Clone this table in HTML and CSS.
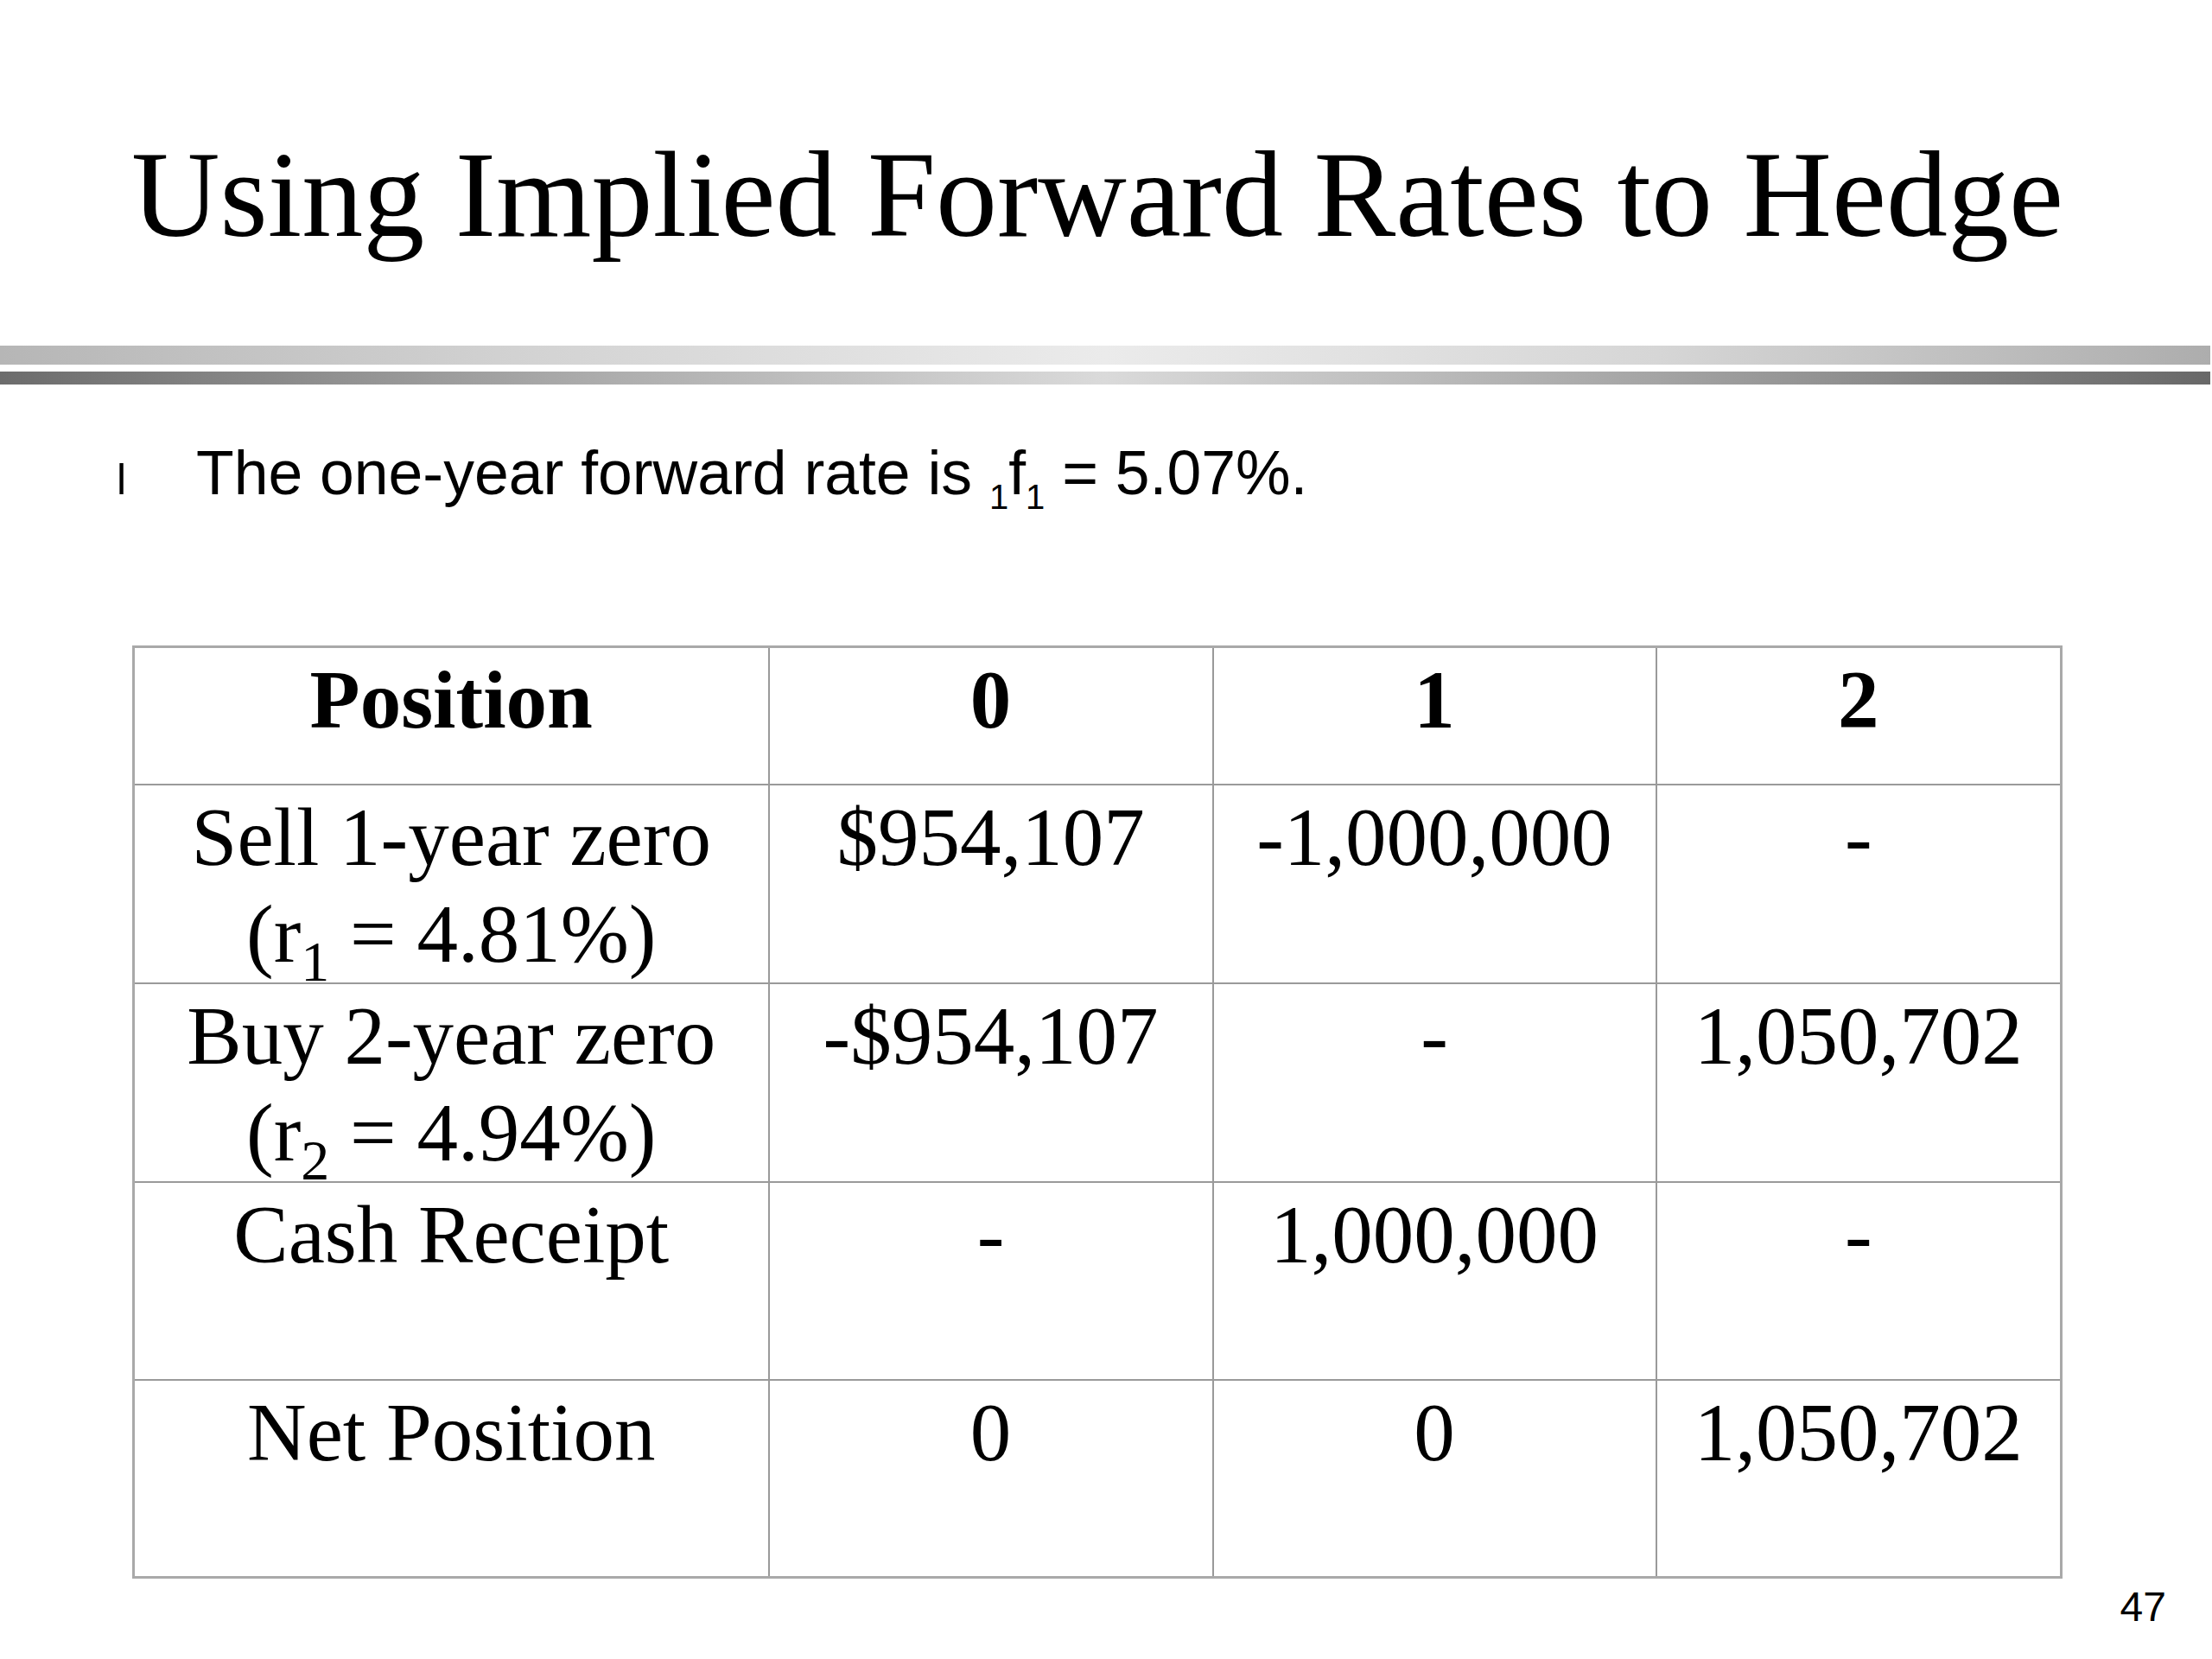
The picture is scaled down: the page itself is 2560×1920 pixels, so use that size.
FILE: index.html
```html
<!DOCTYPE html>
<html lang="en">
<head>
<meta charset="utf-8">
<title>Using Implied Forward Rates to Hedge</title>
<link rel="stylesheet" href="styles.css">
</head>
<body>
<div class="slide">
  <h1 class="title">Using Implied Forward Rates to Hedge</h1>
  <div class="rule rule-top"></div>
  <div class="rule rule-bottom"></div>
  <ul class="bullets">
    <li><span class="marker">l</span><span class="text">The one-year forward rate is <sub class="bsub">1</sub>f<sub class="bsub">1</sub> = 5.07%.</span></li>
  </ul>
  <table class="hedge">
    <colgroup>
      <col class="c-pos">
      <col class="c-0">
      <col class="c-1">
      <col class="c-2">
    </colgroup>
    <thead>
      <tr class="head-row">
        <th>Position</th>
        <th>0</th>
        <th>1</th>
        <th>2</th>
      </tr>
    </thead>
    <tbody>
      <tr>
        <td>Sell 1-year zero<br>(r<sub class="tsub">1</sub> = 4.81%)</td>
        <td>$954,107</td>
        <td>-1,000,000</td>
        <td>-</td>
      </tr>
      <tr>
        <td>Buy 2-year zero<br>(r<sub class="tsub">2</sub> = 4.94%)</td>
        <td>-$954,107</td>
        <td>-</td>
        <td>1,050,702</td>
      </tr>
      <tr>
        <td>Cash Receipt</td>
        <td>-</td>
        <td>1,000,000</td>
        <td>-</td>
      </tr>
      <tr>
        <td>Net Position</td>
        <td>0</td>
        <td>0</td>
        <td>1,050,702</td>
      </tr>
    </tbody>
  </table>
  <div class="page-num">47</div>
</div>
</body>
</html>
```

FILE: styles.css
```css
html, body {
  margin: 0;
  padding: 0;
  background: #ffffff;
}

.slide {
  width: 2560px;
  height: 1920px;
  background: #ffffff;
  color: #000000;
  overflow: hidden;
}

.title {
  margin: 145px 0 0 0;
  padding-left: 152px;
  font-family: "Liberation Serif", "Times New Roman", serif;
  font-weight: normal;
  font-size: 142px;
  line-height: 160px;
  height: 160px;
  white-space: nowrap;
}

.rule {
  width: 2558px;
}

.rule-top {
  margin-top: 95px;
  height: 22px;
  background: linear-gradient(to right, #b6b6b6 0%, #d4d4d4 25%, #ebebeb 50%, #d6d6d6 75%, #adadad 100%);
}

.rule-bottom {
  margin-top: 8px;
  height: 15px;
  background: linear-gradient(to right, #6c6c6c 0%, #a8a8a8 25%, #dadada 50%, #a4a4a4 75%, #686868 100%);
}

.bullets {
  list-style: none;
  margin: 57px 0 0 0;
  padding: 0;
  font-family: "Liberation Sans", Arial, sans-serif;
}

.bullets li {
  display: flex;
  align-items: baseline;
  height: 90px;
  line-height: 90px;
}

.marker {
  font-size: 50px;
  width: 92px;
  padding-left: 135px;
  box-sizing: content-box;
}

.text {
  font-size: 71.5px;
  white-space: nowrap;
}

.bsub {
  font-size: 40px;
  vertical-align: -17px;
  line-height: 0;
}

.hedge {
  margin: 155px 0 0 153px;
  border-collapse: collapse;
  table-layout: fixed;
  width: 2231px;
  font-family: "Liberation Serif", "Times New Roman", serif;
  font-size: 95px;
  line-height: 112px;
  border: 3px solid #a9a9a9;
}

.c-pos { width: 735px; }
.c-0 { width: 514px; }
.c-1 { width: 513px; }
.c-2 { width: 469px; }

.hedge th,
.hedge td {
  border: 2px solid #9a9a9a;
  text-align: center;
  vertical-align: top;
  padding: 4px 0 0 0;
  white-space: nowrap;
}

.hedge th {
  font-weight: bold;
}

.head-row {
  height: 159px;
}

.hedge tbody tr {
  height: 229px;
}

.tsub {
  font-size: 66px;
  vertical-align: -22px;
  line-height: 0;
}

.page-num {
  margin-top: 5px;
  padding-right: 53px;
  text-align: right;
  font-family: "Liberation Sans", Arial, sans-serif;
  font-size: 48px;
  line-height: 56px;
}
```
